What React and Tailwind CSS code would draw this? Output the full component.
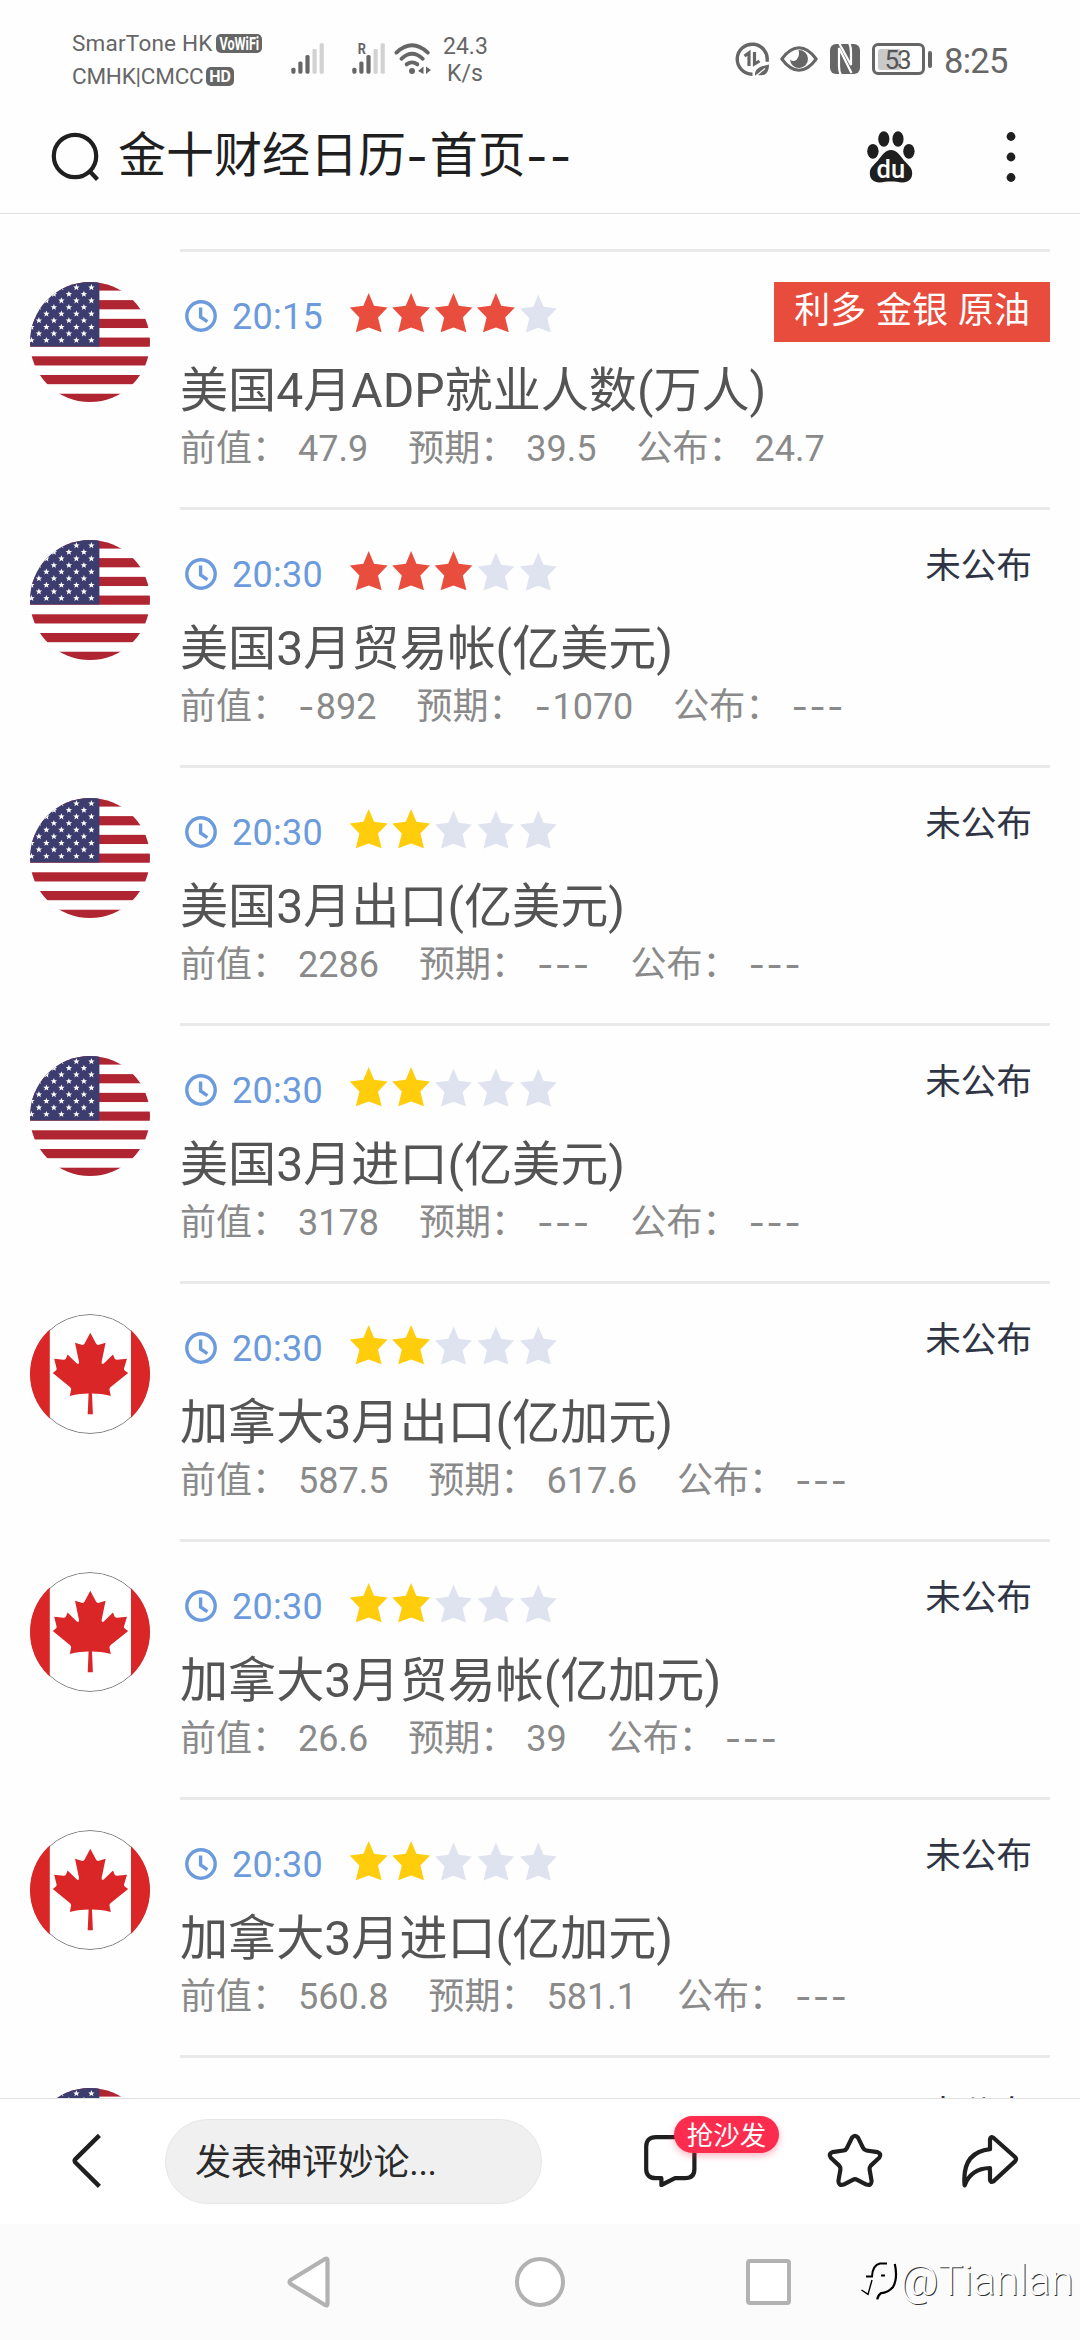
const events = [
    { id: 1, country: 'us', time: '20:15', stars: 4, title: '美国4月ADP就业人数(万人)', previous: '47.9', forecast: '39.5', actual: '24.7', impact: '利多 金银 原油' },
    { id: 2, country: 'us', time: '20:30', stars: 3, title: '美国3月贸易帐(亿美元)', previous: '-892', forecast: '-1070', actual: '---' },
    { id: 3, country: 'us', time: '20:30', stars: 2, title: '美国3月出口(亿美元)', previous: '2286', forecast: '---', actual: '---' },
    { id: 4, country: 'us', time: '20:30', stars: 2, title: '美国3月进口(亿美元)', previous: '3178', forecast: '---', actual: '---' },
    { id: 5, country: 'ca', time: '20:30', stars: 2, title: '加拿大3月出口(亿加元)', previous: '587.5', forecast: '617.6', actual: '---' },
    { id: 6, country: 'ca', time: '20:30', stars: 2, title: '加拿大3月贸易帐(亿加元)', previous: '26.6', forecast: '39', actual: '---' },
    { id: 7, country: 'ca', time: '20:30', stars: 2, title: '加拿大3月进口(亿加元)', previous: '560.8', forecast: '581.1', actual: '---' },
    { id: 8, country: 'us' },
];

const STAR = 'M18.7 0 L24 12.8 L37.6 14.6 L28 24.6 L31.6 39.2 L18.7 34.4 L5.8 39.2 L9.4 24.6 L-0.2 14.6 L13.4 12.8 Z';
const SMALL_STAR = 'M0 -3.3 L0.9 -1 L3.2 -1 L1.4 0.5 L2 2.8 L0 1.4 L-2 2.8 L-1.4 0.5 L-3.2 -1 L-0.9 -1 Z';

// Hyphens are half an em wide in this design, digits stay in the main font
const Num = ({ children }) =>
    children.split(/(-+)/).map((part, i) =>
        part.startsWith('-') ? (
            <span key={i} className="font-[Inter] tracking-[0.035em] align-[-0.04em]">{part}</span>
        ) : (
            part
        )
    );

const UsFlag = () => {
    const stars = [];
    for (let row = 0; row < 9; row++) {
        for (let col = 0; col < 5; col++) {
            stars.push([61.4 - (row % 2) * 7.5 - col * 15, 5.4 + row * 6.6]);
        }
    }
    return (
        <svg className="w-[120px] h-[120px] rounded-full" viewBox="0 0 120 120">
            <rect width="120" height="120" fill="#fff" />
            {[0, 1, 2, 3, 4, 5, 6].map(i => (
                <rect key={i} x="0" y={-0.6 + i * 18.72} width="120" height="9.2" fill="#b02532" />
            ))}
            <rect width="69.4" height="64.5" fill="#3d3c6e" />
            {stars.map(([x, y]) => (
                <path key={`${x}-${y}`} d={SMALL_STAR} transform={`translate(${x} ${y})`} fill="#fff" />
            ))}
        </svg>
    );
};

const CaFlag = () => (
    <svg className="w-[120px] h-[120px] rounded-full" viewBox="0 0 120 120">
        <rect width="120" height="120" fill="#fff" />
        <circle cx="60" cy="60" r="59.5" fill="none" stroke="#808080" strokeWidth="1" />
        <path d="M0 0 H19.8 V120 H0 Z M101 0 H120 V120 H101 Z" fill="#da2626" />
        <path
            d="M60.3 18.7 L66 29.6 Q67 31.4 69 30.8 L75.6 28.8 L71.6 48 Q71.6 51 74 49.2 L83 40.4 L84.6 44.6 Q85.2 46 87 45.7 L97 44.8 L94 54.6 Q93.7 56 95 56.8 L98.2 59 L80.4 73.2 Q79.2 74.2 79.5 75.8 L80.8 82 Q70 79.6 62 79.6 L62.9 100.2 H57.7 L58.6 79.6 Q50.6 79.6 39.8 82 L41.1 75.8 Q41.4 74.2 40.2 73.2 L22.8 59 L25.6 56.8 Q26.9 56 26.6 54.6 L24.2 44.8 L33.6 45.7 Q35.4 46 36 44.6 L37.6 40.4 L46.6 49.2 Q49 51 49 48 L45 28.8 L51.6 30.8 Q53.6 31.4 54.6 29.6 Z"
            fill="#da2626"
        />
    </svg>
);

const Clock = () => (
    <svg className="w-8 h-8" viewBox="0 0 32 32" fill="none" stroke="#6b9bdc" strokeWidth="3.4">
        <circle cx="16" cy="16" r="14.2" />
        <path d="M15.6 7.5 V17 L22.4 21.6" />
    </svg>
);

const Stars = ({ count }) => (
    <svg className="w-[208px] h-10" viewBox="0 0 208 40">
        {[0, 1, 2, 3, 4].map(i => {
            const on = i < count;
            return (
                <path
                    key={i}
                    d={STAR}
                    transform={on ? `translate(${i * 42.4} 0)` : `translate(${i * 42.4 + 0.6} 1.4) scale(0.97)`}
                    fill={on ? (count > 2 ? '#e94d3d' : '#ffcd0c') : '#dfe3f0'}
                />
            );
        })}
    </svg>
);

const Signal = () => (
    <svg className="w-[34px] h-[31px]" viewBox="0 0 34 31">
        <rect x="0.3" y="24.7" width="4.2" height="6" rx="1.6" fill="#666" />
        <rect x="7.3" y="18.4" width="4.2" height="12.3" rx="1.6" fill="#666" />
        <rect x="14.4" y="12" width="4.2" height="18.7" rx="1.6" fill="#666" />
        <rect x="21.5" y="6" width="4.2" height="24.7" rx="1.2" fill="#d2d2d2" />
        <rect x="28.6" y="0.3" width="4.2" height="30.4" rx="1.2" fill="#d2d2d2" />
    </svg>
);

const StatusBar = () => (
    <div className="flex h-[108px] text-[#666]">
        <div className="w-[219px] ml-[72px] pt-[27px] text-[22.5px] leading-[33px] whitespace-nowrap">
            <div className="flex items-center">
                <span className="w-36 tracking-[0.01em]">SmarTone HK</span>
                <span className="flex justify-center w-[46px] h-[19px] rounded-[5px] bg-[#666] text-white text-[18px] leading-[20px] font-bold">
                    <span className="scale-x-[0.7]">VoWiFi</span>
                </span>
            </div>
            <div className="flex items-center">
                <span className="w-[134px] tracking-[-0.01em]">CMHK|CMCC</span>
                <span className="w-7 h-[19px] rounded-[5px] bg-[#666] text-white text-[16px] leading-[20px] font-bold text-center">HD</span>
            </div>
        </div>
        <div className="pt-[43px]"><Signal /></div>
        <div className="relative ml-[27px] pt-[43px]">
            <span className="absolute left-[5px] top-[41px] text-[15px] leading-4 font-bold scale-x-[0.85]">R</span>
            <Signal />
        </div>
        <svg className="w-[38px] h-8 ml-2 mt-[43px]" viewBox="0 0 38 32" fill="none" stroke="#666" strokeWidth="3.8" strokeLinecap="round">
            <path d="M2.4 9.6 Q18 -5 33.8 9.6" />
            <path d="M7.4 15.8 Q18 5.8 28.8 15.8" />
            <path d="M12.6 21.4 Q18 17.4 23.4 21.4" />
            <circle cx="18" cy="28" r="3" fill="#666" stroke="none" />
            <path d="M29.5 23.6 V31 L24 28 Z M32 23.6 L37 27 L32 31 Z" fill="#666" stroke="none" />
        </svg>
        <div className="w-11 ml-[11px] pt-[33px] text-[23px] leading-[27px] text-center">
            <div>24.3</div>
            <div>K/s</div>
        </div>
        <svg className="w-[35px] h-[35px] ml-[248px] mt-[42px]" viewBox="0 0 35 35" fill="none" stroke="#666" strokeWidth="3.4">
            <path d="M17.5 32.2 A15 15 0 1 1 32 19.8" />
            <path d="M9.5 14 L14 10.8 V24 M19.5 10 V22 L24.5 19" strokeWidth="3.2" />
            <path d="M20 34 C19.5 26 25 24.5 34 22.5 C34 32 29 35 21.5 32.5 Z" fill="#666" stroke="none" />
            <path d="M21 34 L30 26.5" stroke="#fff" strokeWidth="1.2" />
        </svg>
        <svg className="w-[38px] h-[26px] ml-[10px] mt-[46px]" viewBox="0 0 38 26">
            <path d="M1.8 13 Q10 1.8 19 1.8 Q28 1.8 36.2 13 Q28 24.2 19 24.2 Q10 24.2 1.8 13 Z" fill="none" stroke="#666" strokeWidth="3" strokeLinejoin="round" />
            <path d="M18.5 4 A9 9 0 1 1 10 13.5 Q13.5 16.5 16.8 13.5 Q20 9.5 18.5 4 Z" fill="#666" />
        </svg>
        <svg className="w-[30px] h-[30px] ml-3 mt-11" viewBox="0 0 30 30" fill="none" stroke="#fff" strokeWidth="2.2">
            <rect width="30" height="30" rx="6" fill="#666" stroke="none" />
            <path d="M11 31 Q9 28 9 22 V4 L21.5 29" />
            <path d="M8.5 -2 L21 21 V8 Q21 2 19 -1" />
        </svg>
        <div className="w-[53px] h-8 ml-3 mt-[43px] rounded-[6px] border-[3px] border-[#666] p-[2.5px]">
            <div className="relative w-[23px] h-full rounded-[3px] bg-[#c9c9c9]">
                <span className="absolute left-[7px] top-0 text-[26px] leading-[22px] tracking-[-0.08em] text-[#555]">53</span>
            </div>
        </div>
        <div className="w-1 h-[17px] ml-[3px] mt-[51px] rounded-full bg-[#666]"></div>
        <div className="ml-3 mt-10 text-[34.5px] leading-[42px] tracking-[-0.02em]">8:25</div>
    </div>
);

const Header = () => (
    <header className="flex items-center h-[106px] pb-2 border-b border-[#e0e0e0] text-[#1f1f1f]">
        <svg className="w-[50px] h-[50px] ml-[51px]" viewBox="0 0 50 50" fill="none" stroke="#1f1f1f" strokeWidth="4.2">
            <circle cx="24" cy="24" r="21.2" />
            <path d="M38.5 39 L46.5 47.5" />
        </svg>
        <h1 className="ml-[17px] flex-1 text-[48px] leading-[64px] whitespace-nowrap"><Num>金十财经日历-首页--</Num></h1>
        <svg className="w-12 h-[52px]" viewBox="0 0 48 52" fill="#1f1f1f">
            <ellipse cx="16.8" cy="8" rx="5.6" ry="7.8" />
            <ellipse cx="31" cy="8" rx="5.6" ry="7.8" />
            <ellipse cx="5.9" cy="20.3" rx="5.7" ry="7.4" />
            <ellipse cx="41.9" cy="20.3" rx="5.7" ry="7.4" />
            <path d="M24 19 C30 19 33 24.5 37 29.5 C41 34 45.2 36.5 45.2 42 C45.2 48.5 41 51.5 35.5 51.4 C31 51.3 28.5 50.6 24 50.6 C19.5 50.6 17 51.3 12.5 51.4 C7 51.5 2.8 48.5 2.8 42 C2.8 36.5 7 34 11 29.5 C15 24.5 18 19 24 19 Z" />
            <text x="23.8" y="46.6" textAnchor="middle" fontSize="25.5" fontWeight="500" fill="#fff" fontFamily="Roboto">du</text>
        </svg>
        <svg className="w-[10px] h-[52px] ml-[91px] mr-[64px]" viewBox="0 0 10 52" fill="#1f1f1f">
            <circle cx="5" cy="5.5" r="4.4" />
            <circle cx="5" cy="26" r="4.4" />
            <circle cx="5" cy="46.5" r="4.4" />
        </svg>
    </header>
);

const Field = ({ label, value }) => (
    <span className="flex">
        {label}：<span className="ml-[10px]"><Num>{value}</Num></span>
    </span>
);

const EventRow = ({ event }) => (
    <li className="flex h-[258px] px-[30px]">
        <div className="w-[150px] pt-[33px] shrink-0">
            {event.country === 'us' ? <UsFlag /> : <CaFlag />}
        </div>
        <div className="flex-1 border-t-[3px] border-[#e9e9e9] pt-[30px]">
            <div className="flex justify-end h-[73px]">
                {event.time && (
                    <div className="flex flex-1 pl-[5px]">
                        <div className="pt-[18px]"><Clock /></div>
                        <span className="w-[101px] ml-[15px] pt-[14px] text-[36px] leading-[42px] tracking-[0.008em] text-[#6b9bdc]">{event.time}</span>
                        <div className="ml-[17px] pt-[11px]"><Stars count={event.stars} /></div>
                    </div>
                )}
                {event.impact ? (
                    <span className="h-[60px] px-5 bg-[#e74c3c] text-white text-[36px] leading-[58px] [word-spacing:1px] whitespace-nowrap">{event.impact}</span>
                ) : (
                    <span className="pr-[18px] text-[#2f3545] text-[35.6px] leading-[52px]">未公布</span>
                )}
            </div>
            {event.title && (
                <>
                    <h2 className="text-[48.1px] leading-[72px] text-[#545454] whitespace-nowrap">{event.title}</h2>
                    <div className="flex gap-10 text-[36px] leading-[44px] text-[#8a8a8a] whitespace-nowrap">
                        <Field label="前值" value={event.previous} />
                        <Field label="预期" value={event.forecast} />
                        <Field label="公布" value={event.actual} />
                    </div>
                </>
            )}
        </div>
    </li>
);

const BottomBar = () => (
    <div className="flex h-[126px] border-t border-[#e0e0e0] bg-white">
        <svg className="w-[30px] h-14 ml-[72px] mt-[34px]" viewBox="0 0 30 56" fill="none" stroke="#1f1f1f" strokeWidth="4.4" strokeLinejoin="round">
            <path d="M27.4 2.4 L3.2 26.4 Q2.2 27.8 3.2 29.2 L27.4 53.4" />
        </svg>
        <div className="w-[377px] h-[85px] ml-[63px] mt-5 rounded-full border border-[#e6e6e6] bg-[#f0f0f0] pl-[29px] text-[36px] leading-[86px] tracking-[-0.3px] text-[#2b2b2b]">
            发表神评妙论...
        </div>
        <div className="relative w-[55px] ml-[101px] pt-9">
            <svg className="w-[55px] h-[52px]" viewBox="0 0 55 52" fill="none" stroke="#1f1f1f" strokeWidth="4.2">
                <path d="M13 2.2 H42 Q51.4 2.2 51.4 11.6 V34 Q51.4 43.2 42 43.2 H32 L18.4 50 V43.2 H13 Q3.2 43.2 3.2 34 V11.6 Q3.2 2.2 13 2.2 Z" strokeLinejoin="round" />
            </svg>
            <span className="absolute left-[31px] top-[17px] w-[105px] h-[37px] rounded-full bg-[#fb2c4e] text-white text-[26.5px] leading-[39px] text-center whitespace-nowrap shadow-[0_3px_7px_rgba(251,44,78,0.35)]">
                抢沙发
            </span>
        </div>
        <svg className="w-[56px] h-14 ml-[129px] mt-[34px]" viewBox="0 0 56 56" fill="none" stroke="#1f1f1f" strokeWidth="4.2" strokeLinejoin="round">
            <path d="M25 4.6 Q28 1 31 4.6 L36.2 15.2 Q37.2 17.2 39.4 17.5 L50.6 19.2 Q55 20.8 52.2 24.8 L43.8 32.6 Q42.2 34.4 42.6 36.6 L44.6 48 Q44.4 53 39.4 51.6 L30.2 46.8 Q28 45.6 25.8 46.8 L16.6 51.6 Q11.6 53 11.4 48 L13.4 36.6 Q13.8 34.4 12.2 32.6 L3.8 24.8 Q1 20.8 5.4 19.2 L16.6 17.5 Q18.8 17.2 19.8 15.2 Z" />
        </svg>
        <svg className="w-[58px] h-[54px] ml-[78px] mt-9" viewBox="0 0 58 54" fill="none" stroke="#1f1f1f" strokeWidth="4.2" strokeLinejoin="round">
            <path d="M29 14.2 V4.4 Q29.2 1 32.4 2.8 L54 22 Q56 24 54 26.4 L32.4 46.4 Q29.4 48 29 45 V33 Q10 33.4 3.6 50.4 Q0.6 17.4 29 14.2 Z" />
        </svg>
    </div>
);

const Watermark = () => (
    <div className="absolute left-[856px] top-[32px] flex items-center text-[#fdfdfd]">
        <svg className="w-11 h-[50px]" viewBox="0 0 44 50" fill="none" stroke="#000" strokeWidth="2">
            <path d="M10 20.5 H16 Q16.5 9 24 7.4 H31 M25 19.5 H29" />
            <path d="M16 24 L12 38.4 L5.5 34" strokeWidth="1.4" />
            <path d="M38.8 8 Q42 22 37 31 Q32 36.8 25 37.2 Q22 39 21.2 43.4" strokeWidth="2.2" />
        </svg>
        <span className="text-[42px] leading-[50px] font-light [text-shadow:1px_1px_0_#333]">@Tianlan</span>
    </div>
);

const NavBar = () => (
    <div className="relative flex h-[116px] bg-[#fbfbfb]">
        <svg className="w-[44px] h-[52px] ml-[287px] mt-8" viewBox="0 0 44 52" fill="#fff" stroke="#b2b2b2" strokeWidth="4.2" strokeLinejoin="round">
            <path d="M40.5 4 V48 Q40.4 50.4 38 49 L3.6 28 Q1.6 26 3.6 24 L38 3 Q40.4 1.8 40.5 4 Z" />
        </svg>
        <div className="w-[50px] h-[50px] ml-[184px] mt-[33px] rounded-full border-[4.5px] border-[#b2b2b2] bg-white"></div>
        <div className="w-[45px] h-[46px] ml-[181px] mt-[35px] rounded-[4px] border-[4.5px] border-[#b2b2b2] bg-white"></div>
        <Watermark />
    </div>
);

export default function App() {
    return (
        <div className="flex flex-col w-[1080px] h-[2340px] overflow-hidden bg-[#fefefe] font-[Roboto,'Noto_Sans_CJK_SC',sans-serif]">
            <StatusBar />
            <Header />
            <ul className="flex-1 min-h-0 overflow-hidden pt-[35px]">
                {events.map(event => (
                    <EventRow key={event.id} event={event} />
                ))}
            </ul>
            <BottomBar />
            <NavBar />
        </div>
    );
}
